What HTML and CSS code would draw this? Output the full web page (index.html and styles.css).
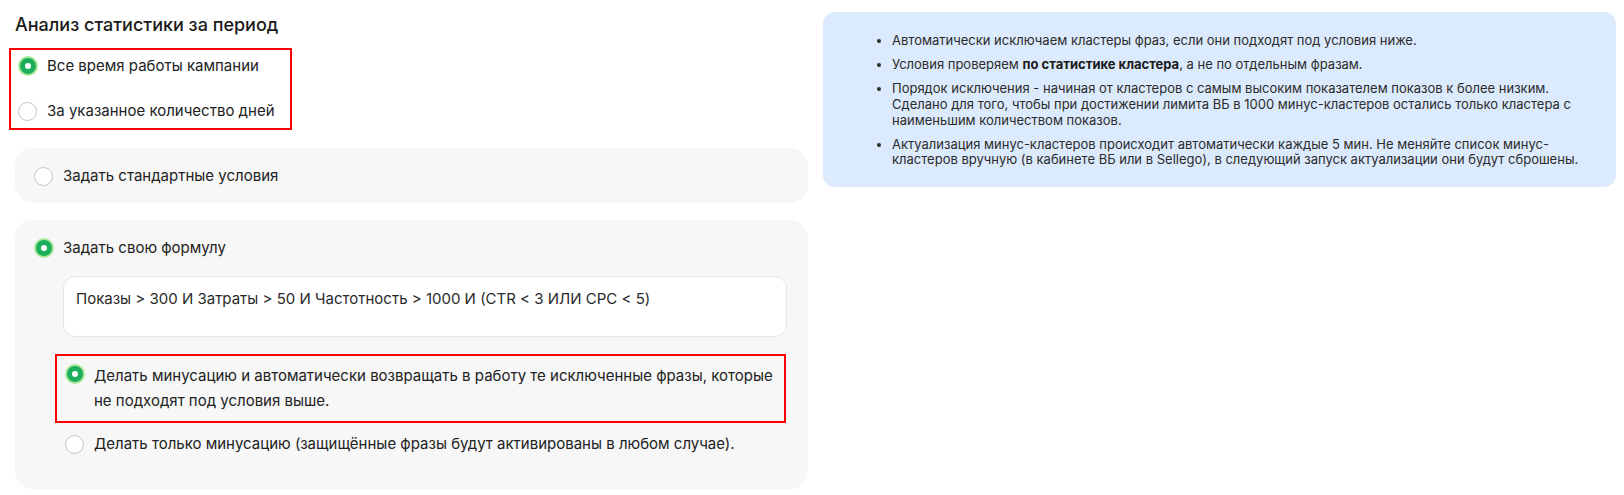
FILE: index.html
```html
<!DOCTYPE html>
<html lang="ru">
<head>
<meta charset="utf-8">
<title>Анализ статистики</title>
<link rel="stylesheet" href="styles.css">
</head>
<body>
<div class="page">
  <section class="left">
    <h2 class="title">Анализ статистики за период</h2>
    <div class="mark period">
      <label class="opt"><span class="radio on"></span><span>Все время работы кампании</span></label>
      <label class="opt"><span class="radio"></span><span>За указанное количество дней</span></label>
    </div>
    <div class="card card-std">
      <label class="opt"><span class="radio"></span><span>Задать стандартные условия</span></label>
    </div>
    <div class="card card-formula">
      <label class="opt"><span class="radio on"></span><span>Задать свою формулу</span></label>
      <div class="formula">Показы &gt; 300 И Затраты &gt; 50 И Частотность &gt; 1000 И (CTR &lt; 3 ИЛИ CPC &lt; 5)</div>
      <div class="mark mode-mark">
        <label class="opt opt-top"><span class="radio on"></span><span class="opt-text">Делать минусацию и автоматически возвращать в работу те исключенные фразы, которые<br>не подходят под условия выше.</span></label>
      </div>
      <label class="opt opt-last"><span class="radio"></span><span>Делать только минусацию (защищённые фразы будут активированы в любом случае).</span></label>
    </div>
  </section>
  <aside class="info">
    <ul class="info-list">
      <li>Автоматически исключаем кластеры фраз, если они подходят под условия ниже.</li>
      <li>Условия проверяем <b>по статистике кластера</b>, а не по отдельным фразам.</li>
      <li>Порядок исключения - начиная от кластеров с самым высоким показателем показов к более низким.<br>Сделано для того, чтобы при достижении лимита ВБ в 1000 минус-кластеров остались только кластера с<br>наименьшим количеством показов.</li>
      <li>Актуализация минус-кластеров происходит автоматически каждые 5 мин. Не меняйте список минус-<br>кластеров вручную (в кабинете ВБ или в Sellego), в следующий запуск актуализации они будут сброшены.</li>
    </ul>
  </aside>
</div>
</body>
</html>
```
FILE: styles.css
```css
* { box-sizing: border-box; }
html, body { margin: 0; padding: 0; background: #ffffff; }
body {
  font-family: "Inter", "Noto Sans", sans-serif;
  color: #1f1f1f;
  font-size: 15px;
}
.page {
  display: grid;
  grid-template-columns: 793px 793px;
  column-gap: 15px;
  padding: 12px 8px 0 15px;
  align-items: start;
}
.left { display: flex; flex-direction: column; }
.title {
  margin: 0;
  font-size: 18px;
  line-height: 24px;
  font-weight: 500;
  color: #1a1a1a;
  padding-top: 1px;
}
.opt {
  display: flex;
  align-items: center;
  gap: 10px;
  line-height: 24px;
  font-size: 15px;
  color: #222;
}
.radio {
  flex: none;
  width: 19px;
  height: 19px;
  border-radius: 50%;
  border: 1.5px solid #c4c4cc;
  background: #fff;
}
.radio.on {
  width: 16px;
  height: 16px;
  margin: 0 1.5px;
  border: 5px solid #1cae5a;
  box-shadow: 0 0 0 2px #a9e89c;
}
.mark { border: 2px solid #ff0000; }
.period {
  margin: 11px 0 0 -6px;
  width: 283px;
  padding: 4px 0 5px 7px;
  display: flex;
  flex-direction: column;
  gap: 21px;
}
.card {
  background: #f7f7f7;
  border-radius: 18px;
}
.card-std {
  margin-top: 18px;
  height: 55px;
  padding: 16px 19px 0;
}
.card-formula {
  margin-top: 17px;
  height: 269px;
  padding: 16px 21px 0 19px;
  display: flex;
  flex-direction: column;
}
.formula {
  margin: 16px 0 0 29px;
  height: 61px;
  background: #fff;
  border: 1px solid #e6e6e6;
  border-radius: 12px;
  padding: 10px 12px;
  line-height: 24px;
  font-size: 15px;
  color: #2a2a2a;
}
.mode-mark {
  margin: 17px 1px 0 21px;
  padding: 7px 8px 8px 8px;
}
.opt-top { align-items: flex-start; }
.opt-top .radio { margin-top: 3px; }
.opt-text { line-height: 25px; }
.opt-last { margin: 9px 0 0 31px; }
.info {
  background: #dbeafd;
  border-radius: 12px;
  height: 175px;
  padding: 21px 20px 0 0;
}
.info-list {
  margin: 0;
  padding-left: 69px;
  font-size: 13px;
  line-height: 15.6px;
  color: #2b2b2b;
}
.info-list li { margin-bottom: 8.6px; }
.info-list b { font-weight: 700; color: #1a1a1a; }
```
